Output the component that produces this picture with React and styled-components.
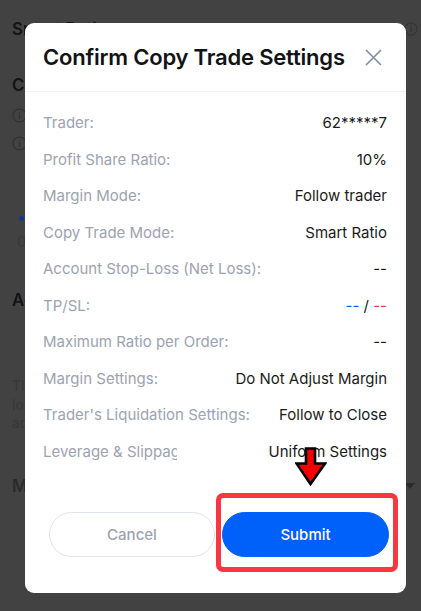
import React from "react";
import styled, { createGlobalStyle } from "styled-components";

const Global = createGlobalStyle`
  html, body { margin: 0; padding: 0; background: #424242; }
  body { font-family: Inter, "Liberation Sans", sans-serif; }
`;

const Page = styled.div`
  position: relative;
  width: 421px;
  height: 611px;
  overflow: hidden;
  background: #424242;
`;

const Backdrop = styled.div`
  display: flex;
  flex-direction: column;
  height: 100%;
  box-sizing: border-box;
  padding: 19px 3px 0 12px;
  color: #111316;
  filter: blur(0.6px);
`;

const BackHeading = styled.div`
  display: flex;
  justify-content: space-between;
  align-items: center;
  font-size: 17px;
  font-weight: 600;
  line-height: 20px;
  margin-top: ${(p) => p.$top || 0}px;
  color: ${(p) => p.$color || "#111316"};
`;

const BackInfo = styled.div`
  display: flex;
  margin-top: ${(p) => p.$top}px;
`;

const BackDot = styled.div`
  width: 5px;
  height: 5px;
  border-radius: 50%;
  background: #0b3a8c;
  margin: 65px 0 0 7px;
`;

const BackZero = styled.div`
  font-size: 15px;
  line-height: 18px;
  color: #383a3d;
  margin: 12px 0 0 5px;
`;

const BackPara = styled.div`
  font-size: 14px;
  line-height: 18.5px;
  color: #353739;
  margin-top: 67px;
`;

const BackCaret = styled.div`
  width: 0;
  height: 0;
  border-left: 5px solid transparent;
  border-right: 5px solid transparent;
  border-top: 6px solid #2a2b2e;
  margin-right: 3px;
`;

const Modal = styled.div`
  position: absolute;
  left: 25px;
  top: 23px;
  width: 381px;
  height: 570px;
  display: flex;
  flex-direction: column;
  background: #fff;
  border-radius: 9px;
`;

const Header = styled.div`
  display: flex;
  align-items: center;
  justify-content: space-between;
  height: 69px;
  box-sizing: border-box;
  padding: 0 24px 0 18px;
  border-bottom: 1px solid #f1f2f4;
`;

const Title = styled.h2`
  margin: 0;
  font-size: 22px;
  font-weight: 600;
  letter-spacing: -0.2px;
  color: #111316;
`;

const Rows = styled.div`
  display: flex;
  flex-direction: column;
  padding: 12.5px 19px 0 18px;
`;

const Row = styled.div`
  display: flex;
  align-items: center;
  justify-content: space-between;
  height: 36.5px;
  font-size: 15px;
  white-space: nowrap;
`;

const Label = styled.span`
  color: #9ca3b1;
  overflow: hidden;
  max-width: ${(p) => p.$max || "none"};
`;

const Value = styled.span`
  color: #1a1c20;
`;

const Tone = styled.span`
  color: ${(p) => p.$c};
`;

const Footer = styled.div`
  display: flex;
  gap: 7px;
  margin-top: auto;
  padding: 0 18px 36px 24px;
`;

const Button = styled.button`
  flex: 0 0 ${(p) => p.$w}px;
  height: 45px;
  box-sizing: border-box;
  border-radius: 23px;
  font: 500 15px Inter, "Liberation Sans", sans-serif;
  color: ${(p) => (p.$primary ? "#fff" : "#9ca3b1")};
  background: ${(p) => (p.$primary ? "#0060fa" : "#fff")};
  border: 1px solid ${(p) => (p.$primary ? "#0060fa" : "#dfe3ea")};
`;

const Highlight = styled.div`
  position: absolute;
  left: 216px;
  top: 493px;
  width: 182px;
  height: 79px;
  box-sizing: border-box;
  border: 5px solid #fb3541;
  border-radius: 7px;
`;

const ArrowMark = styled.svg`
  position: absolute;
  left: 295px;
  top: 447px;
`;

const Info = ({ size = 15 }) => (
  <svg width={size} height={size} viewBox="0 0 16 16" fill="none" stroke="#2e2f31" strokeWidth="1.1">
    <circle cx="8" cy="8" r="7" />
    <path d="M8 7v4.5M8 4.2v1.2" />
  </svg>
);

const rows = [
  ["Trader:", "62*****7"],
  ["Profit Share Ratio:", "10%"],
  ["Margin Mode:", "Follow trader"],
  ["Copy Trade Mode:", "Smart Ratio"],
  ["Account Stop-Loss (Net Loss):", "--"],
  ["TP/SL:", null],
  ["Maximum Ratio per Order:", "--"],
  ["Margin Settings:", "Do Not Adjust Margin"],
  ["Trader's Liquidation Settings:", "Follow to Close"],
  ["Leverage & Slippage Settings:", "Uniform Settings", "134px"],
];

export default function App() {
  return (
    <Page>
      <Global />
      <Backdrop>
        <BackHeading>
          <span>Smart Ratio</span>
          <Info size={14} />
        </BackHeading>
        <BackHeading $top={36}>Copy</BackHeading>
        <BackInfo $top={13}><Info /></BackInfo>
        <BackInfo $top={13}><Info /></BackInfo>
        <BackDot />
        <BackZero>0</BackZero>
        <BackHeading $top={39}>Advanced</BackHeading>
        <BackPara>
          The
          <br />
          loss
          <br />
          adj
        </BackPara>
        <BackHeading $top={43} $color="#2a2b2e">
          <span>Max</span>
          <BackCaret />
        </BackHeading>
      </Backdrop>

      <Modal>
        <Header>
          <Title>Confirm Copy Trade Settings</Title>
          <svg width="17" height="17" viewBox="0 0 17 17" fill="none" stroke="#7f8da3" strokeWidth="1.6">
            <path d="M1 1l15 15M16 1L1 16" />
          </svg>
        </Header>
        <Rows>
          {rows.map(([label, value, max]) => (
            <Row key={label}>
              <Label $max={max}>{label}</Label>
              <Value>
                {value ?? (
                  <>
                    <Tone $c="#0060fa">--</Tone> / <Tone $c="#f0325a">--</Tone>
                  </>
                )}
              </Value>
            </Row>
          ))}
        </Rows>
        <Footer>
          <Button $w={166}>Cancel</Button>
          <Button $w={167} $primary>Submit</Button>
        </Footer>
      </Modal>

      <Highlight />
      <ArrowMark width="32" height="39" viewBox="0 0 32 39">
        <path
          d="M11 1.5h9v15h10L15.5 37 1.5 16.5H11z"
          fill="#f40000"
          stroke="#000"
          strokeWidth="2.6"
          strokeLinejoin="miter"
        />
      </ArrowMark>
    </Page>
  );
}
